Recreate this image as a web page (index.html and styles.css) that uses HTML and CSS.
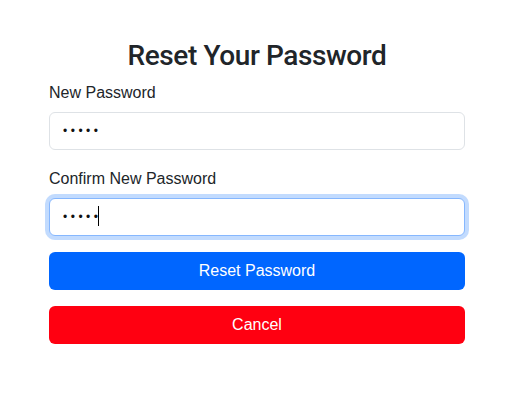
FILE: index.html
```html
<!DOCTYPE html>
<html lang="en">
<head>
  <meta charset="UTF-8">
  <meta name="viewport" content="width=device-width, initial-scale=1.0">
  <title>Reset Your Password</title>
  <link rel="stylesheet" href="styles.css">
</head>
<body>

  <form id="resetForm" class="reset-form">
    <h3 class="title">Reset Your Password</h3>

    <div class="field">
      <label for="newPassword" class="field-label">New Password</label>
      <input type="password" id="newPassword" class="field-input" value="12345">
    </div>

    <div class="field">
      <label for="confirmPassword" class="field-label">Confirm New Password</label>
      <div class="input-wrap">
        <input type="password" id="confirmPassword" class="field-input is-focused" value="12345">
        <span class="caret"></span>
      </div>
    </div>

    <button type="submit" class="btn btn-primary">Reset Password</button>
    <button type="button" class="btn btn-danger">Cancel</button>
  </form>

</body>
</html>
```

FILE: styles.css
```css
* {
  margin: 0;
  padding: 0;
  box-sizing: border-box;
}
html, body {
  background-color: #fff;
  font-family: 'Liberation Sans', Arial, sans-serif;
  color: #212529;
  font-size: 16px;
  line-height: 1.5;
}
body {
  padding: 38px 50px 0 49px;
}
.title {
  font-family: 'Roboto', 'Liberation Sans', sans-serif;
  font-size: 28px;
  font-weight: 500;
  line-height: 1.2;
  letter-spacing: -0.4px;
  text-align: center;
  padding-top: 1px;
  margin-bottom: 7px;
}
.field {
  margin-bottom: 16px;
}
.field-label {
  display: block;
  padding-top: 1px;
  margin-bottom: 7px;
}
.input-wrap {
  position: relative;
}
.field-input {
  display: block;
  width: 100%;
  height: 38px;
  padding: 6px 13px;
  font-family: inherit;
  font-size: 12px;
  letter-spacing: 3.5px;
  color: #111;
  background-color: #fff;
  border: 1px solid #dee2e6;
  border-radius: 6px;
}
.field-input:focus,
.field-input.is-focused {
  outline: none;
  border-color: #86b7fe;
  box-shadow: 0 0 0 4px rgba(13, 110, 253, 0.25);
}
.caret {
  position: absolute;
  left: 49px;
  top: 8px;
  width: 1px;
  height: 20px;
  background-color: #000;
}
.btn {
  display: block;
  width: 100%;
  height: 38px;
  border: none;
  border-radius: 6px;
  font-family: inherit;
  font-size: 16px;
  color: #fff;
  cursor: pointer;
  margin-bottom: 16px;
}
.btn-primary {
  background-color: #0066ff;
}
.btn-danger {
  background-color: #ff0011;
}
```
